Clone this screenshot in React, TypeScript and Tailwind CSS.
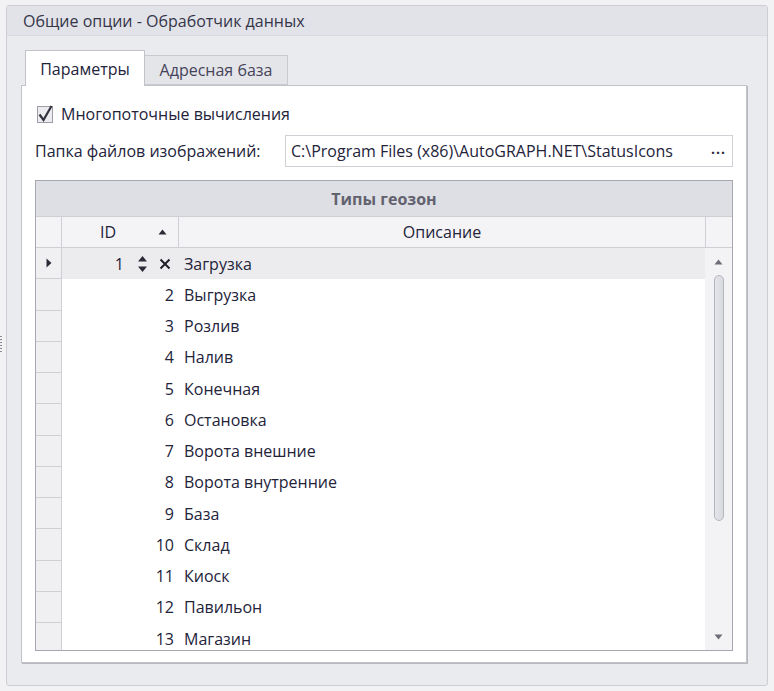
import React from 'react';

const rows = [
  'Загрузка',
  'Выгрузка',
  'Розлив',
  'Налив',
  'Конечная',
  'Остановка',
  'Ворота внешние',
  'Ворота внутренние',
  'База',
  'Склад',
  'Киоск',
  'Павильон',
  'Магазин',
];

const SpinIcon = () => (
  <svg width="11" height="22" viewBox="0 0 11 22" className="shrink-0">
    <path d="M1 8.5 L5.5 3 L10 8.5 Z" fill="#2b2b38" />
    <path d="M1 13.5 L5.5 19 L10 13.5 Z" fill="#2b2b38" />
  </svg>
);

const CloseIcon = () => (
  <svg width="12" height="12" viewBox="0 0 12 12" className="shrink-0">
    <path d="M1.5 1.5 L10.5 10.5 M10.5 1.5 L1.5 10.5" stroke="#1f1f2b" strokeWidth="2" />
  </svg>
);

const Row: React.FC<{ id: number; name: string; selected?: boolean }> = ({ id, name, selected }) => (
  <div className={`flex h-[31.25px] shrink-0 ${selected ? 'bg-[#ececef]' : 'bg-white'}`}>
    <div className="w-[26px] shrink-0 border-r border-b border-[#cfd0d5] bg-[#f0f0f3] flex items-center justify-center">
      {selected && (
        <svg width="6" height="10" viewBox="0 0 6 10">
          <path d="M0.5 0.5 L5.5 5 L0.5 9.5 Z" fill="#2b2b38" />
        </svg>
      )}
    </div>
    {selected ? (
      <div className="w-[117px] shrink-0 flex items-center justify-end pr-[8px]">
        <span>{id}</span>
        <span className="ml-[13px]">
          <SpinIcon />
        </span>
        <span className="ml-[11px]">
          <CloseIcon />
        </span>
      </div>
    ) : (
      <div className="w-[117px] shrink-0 flex items-center justify-end pr-[5px]">
        <span>{id}</span>
      </div>
    )}
    <div className="flex-1 flex items-center pl-[5px]">{name}</div>
  </div>
);

export default function App() {
  return (
    <div
      className="relative w-[774px] h-[691px] bg-[#f2f2f4] pt-[5px] pl-[6px] text-[16px] text-[#23233a]"
      style={{ fontFamily: '"Segoe UI", "Open Sans", "Noto Sans", sans-serif' }}
    >
      {/* splitter grip */}
      <div className="absolute left-0 top-[336px] flex flex-col gap-[2px]">
        {Array.from({ length: 6 }).map((_, i) => (
          <div key={i} className="w-[2px] h-[1px] bg-[#8c8d96]" />
        ))}
      </div>

      <div className="w-[762px] h-[681px] border border-[#cdced3] rounded-[3px] bg-[#eaebef] flex flex-col">
        <div className="h-[30px] shrink-0 bg-[#e2e3e8] border-b border-[#dadbe0] flex items-center pl-[16px] text-[#35354a]">
          Общие опции - Обработчик данных
        </div>

        <div className="flex-1 pl-[14px] pt-[14px]">
          {/* tabs */}
          <div className="flex items-end h-[35px] pl-[4px]">
            <div className="relative z-10 w-[120px] h-[36px] bg-white border border-b-0 border-[#c2c3c9] flex items-center justify-center -mb-[1px]">
              Параметры
            </div>
            <div className="w-[143px] h-[30px] bg-[#e4e5e9] border border-l-0 border-[#c9cacf] flex items-center justify-center text-[#44445a]">
              Адресная база
            </div>
          </div>

          {/* tab page */}
          <div className="w-[726px] h-[578px] bg-white border border-[#c2c3c9] shadow-[1px_1px_0_#b8b9c0] pl-[13px] flex flex-col">
            <div className="flex items-center h-[28px] mt-[14px] pl-[2px] gap-[8px]">
              <div className="w-[16px] h-[17px] border border-[#9d9ea8] bg-[#ececf0] flex items-center justify-center">
                <svg width="16" height="17" viewBox="0 0 16 17" className="overflow-visible">
                  <path d="M2.5 8.5 L6.5 14 L14.5 0" stroke="#33333f" strokeWidth="2.2" fill="none" />
                </svg>
              </div>
              <span>Многопоточные вычисления</span>
            </div>

            <div className="flex items-center mt-[7px] h-[32px]">
              <span className="w-[250px]">Папка файлов изображений:</span>
              <div className="w-[448px] h-[32px] border border-[#cfd0d5] flex items-center pl-[5px] pr-[6px]">
                <span className="flex-1">C:\Program Files (x86)\AutoGRAPH.NET\StatusIcons</span>
                <span className="font-bold tracking-[1px] text-[#2b2b38] leading-none pb-[4px] text-[14px]">...</span>
              </div>
            </div>

            {/* grid */}
            <div className="mt-[13px] w-[698px] h-[471px] border border-[#a6a7af] flex flex-col overflow-hidden">
              <div className="h-[36px] shrink-0 bg-[#dedfe4] border-b border-[#cfd0d5] flex items-center justify-center font-bold text-[#62626f]">
                Типы геозон
              </div>
              <div className="h-[31px] shrink-0 bg-[#f4f4f6] border-b border-[#cfd0d5] flex">
                <div className="w-[26px] shrink-0 border-r border-[#cfd0d5]" />
                <div className="w-[117px] shrink-0 border-r border-[#cfd0d5] flex items-center relative">
                  <span className="pl-[38px]">ID</span>
                  <svg width="9" height="6" viewBox="0 0 9 6" className="absolute left-[96px] top-[12px]">
                    <path d="M0.5 5.5 L4.5 0.5 L8.5 5.5 Z" fill="#2b2b38" />
                  </svg>
                </div>
                <div className="flex-1 border-r border-[#cfd0d5] flex items-center justify-center">Описание</div>
                <div className="w-[26px] shrink-0" />
              </div>
              <div className="flex flex-1 min-h-0">
                <div className="flex-1 flex flex-col overflow-hidden">
                  {rows.map((name, i) => (
                    <Row key={i} id={i + 1} name={name} selected={i === 0} />
                  ))}
                </div>
                <div className="w-[27px] shrink-0 bg-[#f3f3f5] flex flex-col items-center">
                  <svg width="9" height="6" viewBox="0 0 9 6" className="mt-[11px]">
                    <path d="M0.5 5.5 L4.5 0.5 L8.5 5.5 Z" fill="#6e6e7a" />
                  </svg>
                  <div className="mt-[10px] w-[10px] h-[246px] rounded-full border border-[#b5b6be] bg-gradient-to-r from-[#e4e5e9] to-[#d9dadf]" />
                  <div className="flex-1" />
                  <svg width="9" height="6" viewBox="0 0 9 6" className="mb-[10px]">
                    <path d="M0.5 0.5 L4.5 5.5 L8.5 0.5 Z" fill="#6e6e7a" />
                  </svg>
                </div>
              </div>
            </div>
          </div>
        </div>
      </div>
    </div>
  );
}
